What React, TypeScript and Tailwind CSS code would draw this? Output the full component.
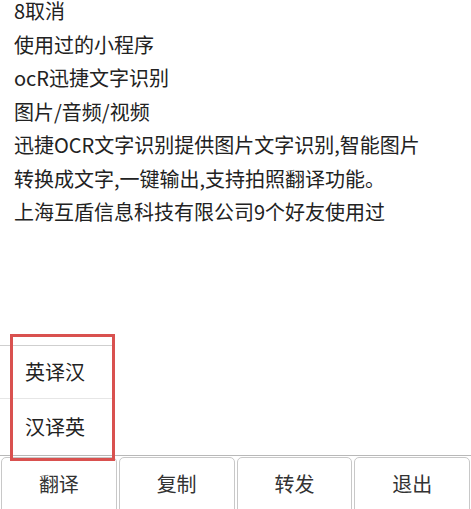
import React from "react"

const lines = [
  "8取消",
  "使用过的小程序",
  "ocR迅捷文字识别",
  "图片/音频/视频",
  "迅捷OCR文字识别提供图片文字识别,智能图片",
  "转换成文字,一键输出,支持拍照翻译功能。",
  "上海互盾信息科技有限公司9个好友使用过",
]

const buttons = ["翻译", "复制", "转发", "退出"]

export default function App() {
  return (
    <div
      className="relative h-[509px] w-[471px] overflow-hidden bg-white text-[#222]"
      style={{ fontFamily: '"Noto Sans CJK SC", "Noto Sans", sans-serif' }}
    >
      <div className="h-[455px] overflow-hidden pl-[14px]">
        <div className="-mt-[6px] flex flex-col">
          {lines.map((line, i) => (
            <div key={i} className="text-[20px] leading-[33.5px] whitespace-nowrap">
              {line}
            </div>
          ))}
        </div>
      </div>

      <div className="flex border-t border-[#b8b8b8] pt-[1px]">
        {buttons.map((b) => (
          <div
            key={b}
            className="mx-[1px] flex h-[62px] flex-1 items-start justify-center rounded-[5px] border border-[#c8c8c8] pt-[12px] text-[20px] leading-[28px] text-[#333]"
          >
            {b}
          </div>
        ))}
      </div>

      {/* popup menu */}
      <div className="absolute left-0 top-[345px] w-[113px] border-t border-[#cfcfcf] bg-white text-[20px] text-[#222]">
        <div className="flex h-[53px] items-center border-b border-[#e6e6e6] pl-[25px]">英译汉</div>
        <div className="flex h-[56px] items-center pl-[25px]">汉译英</div>
      </div>

      {/* highlight box */}
      <div className="absolute left-[10px] top-[334px] h-[127px] w-[105px] border-[3px] border-[#d9514f]" />
    </div>
  )
}
